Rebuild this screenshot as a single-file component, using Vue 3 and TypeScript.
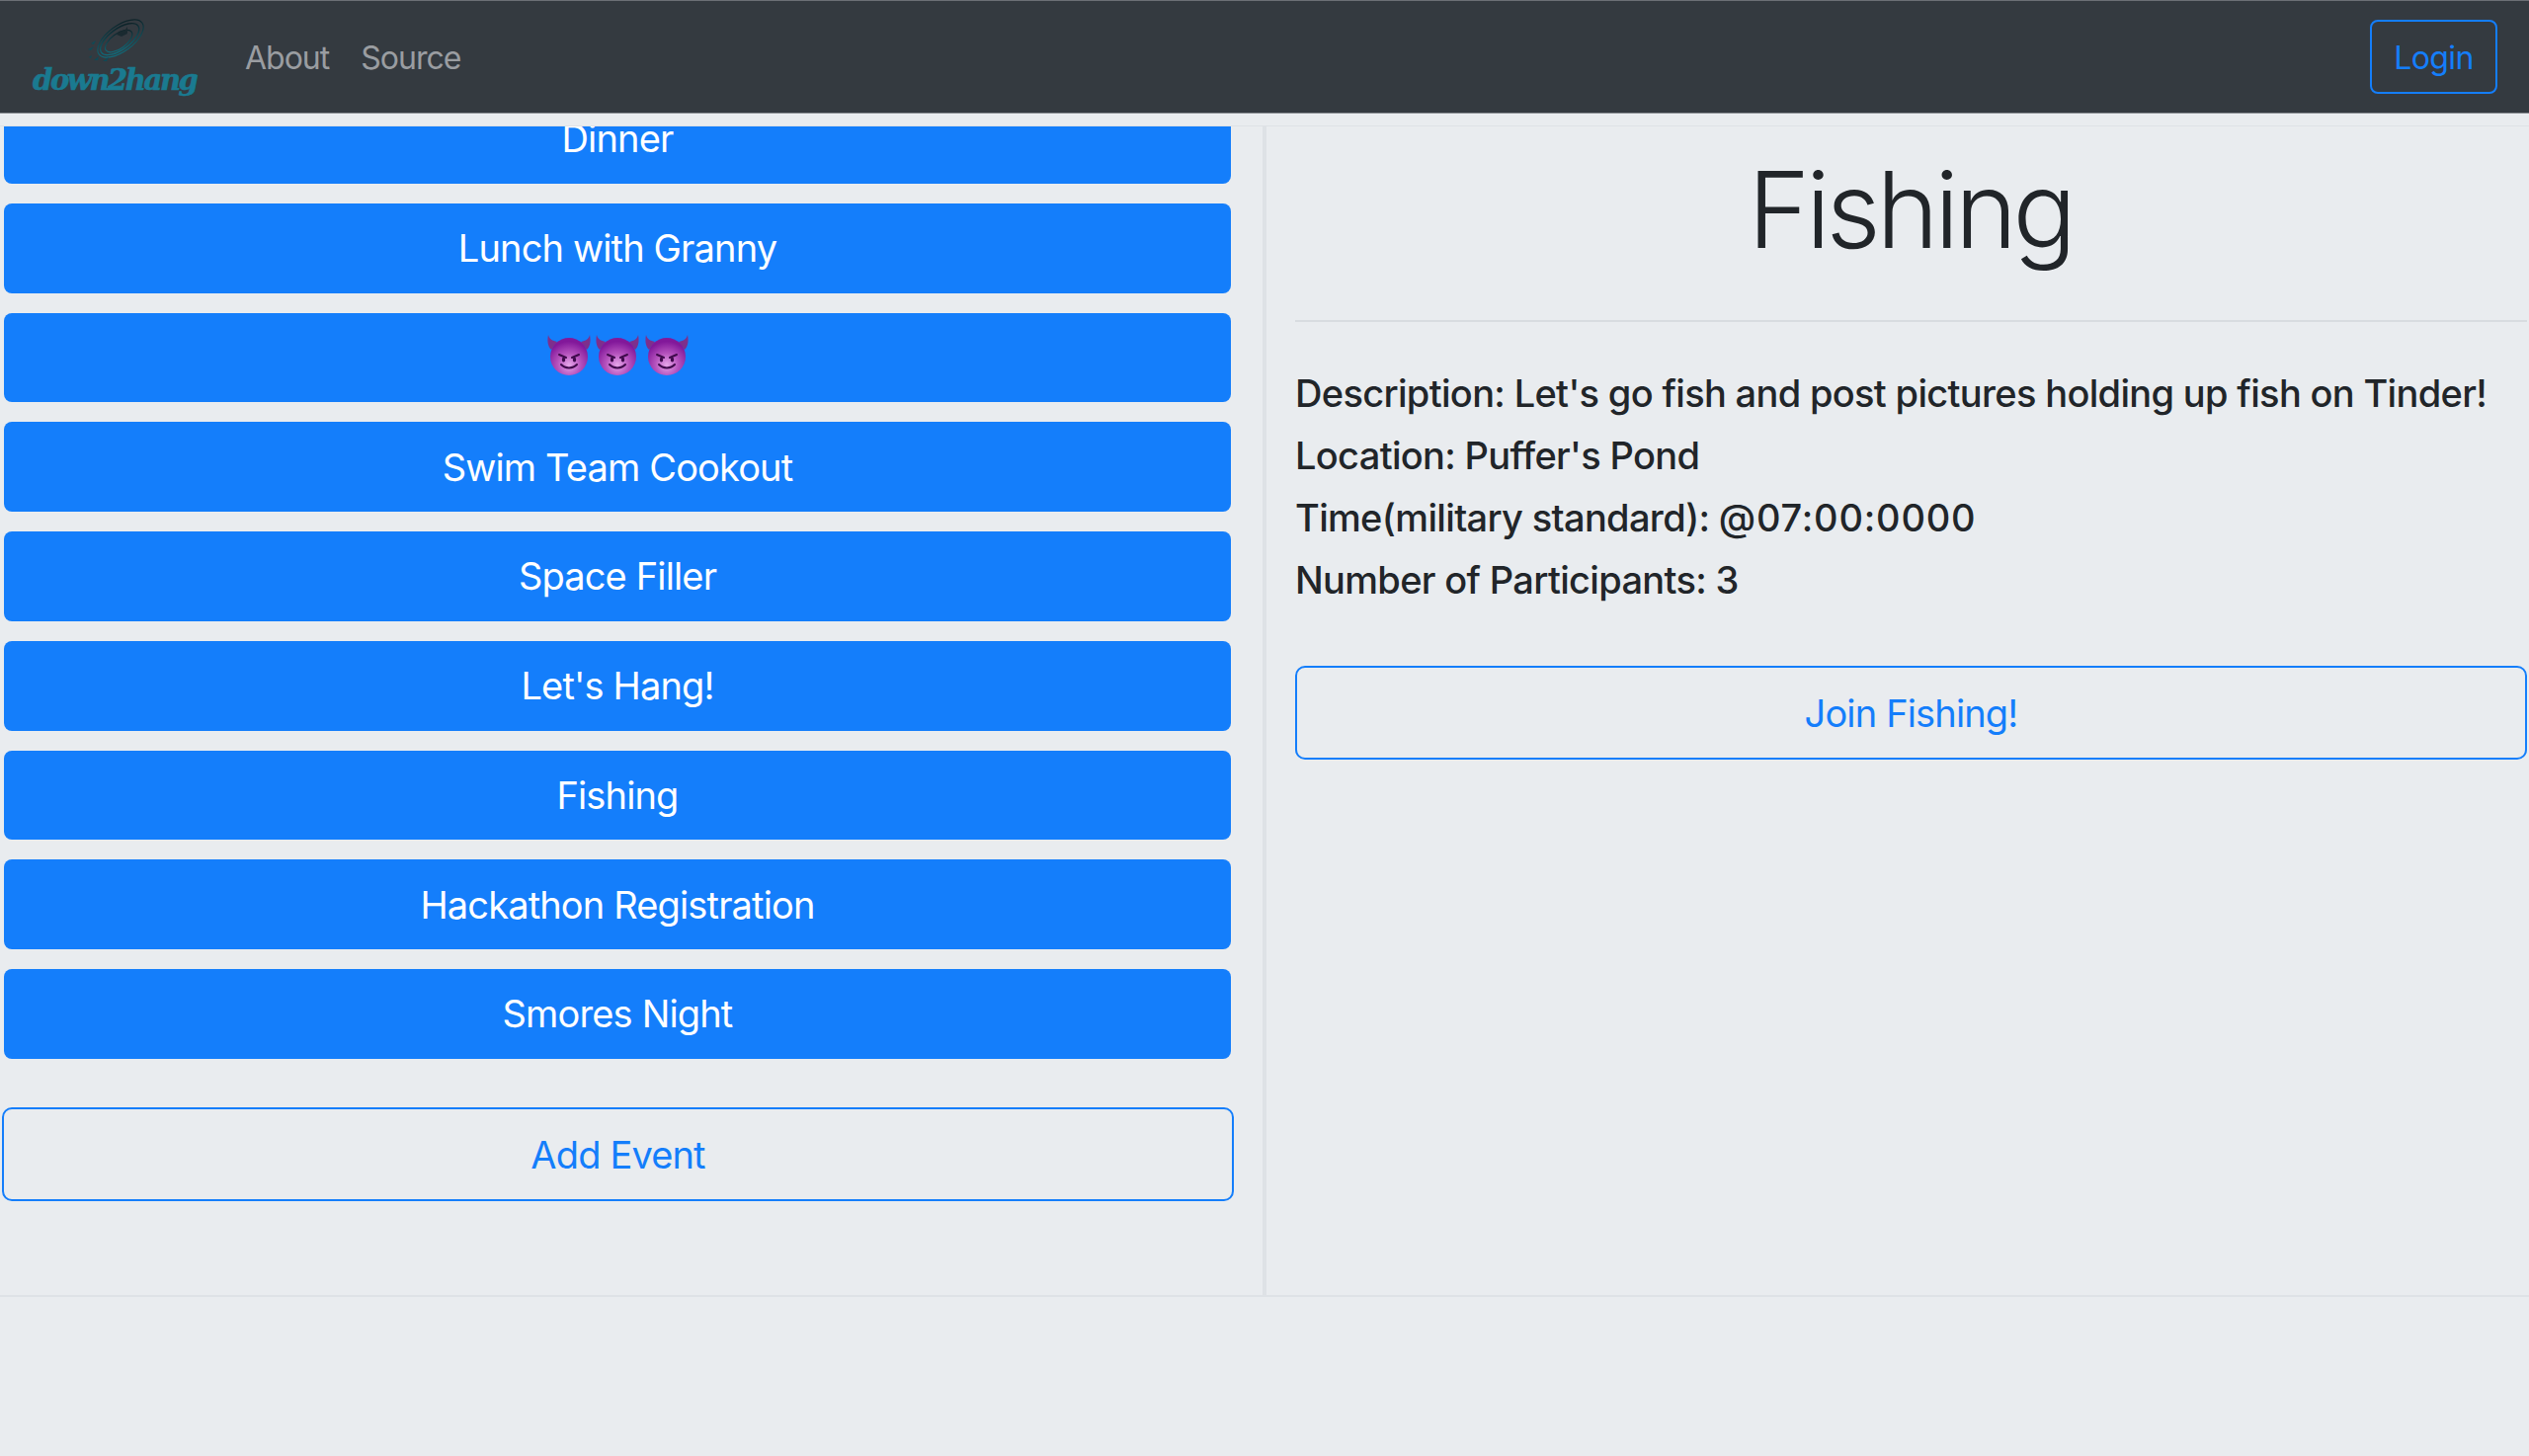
<script setup lang="ts">
interface Detail {
  text: string
  wide?: string
}
const events: string[] = [
  'Lunch with Granny',
  '',
  'Swim Team Cookout',
  'Space Filler',
  "Let's Hang!",
  'Fishing',
  'Hackathon Registration',
  'Smores Night',
]
const details: Detail[] = [
  { text: "Description: Let's go fish and post pictures holding up fish on Tinder!" },
  { text: "Location: Puffer's Pond" },
  { text: 'Time(military standard): ', wide: '@07:00:0000' },
  { text: 'Number of Participants: 3' },
]
</script>

<template>
  <div class="page">
    <nav class="navbar">
      <div class="brand">
        <svg class="logo-icon" viewBox="0 0 64 50" width="64" height="50" aria-hidden="true">
          <defs>
            <linearGradient id="lg" x1="0" y1="1" x2="1" y2="0">
              <stop offset="0" stop-color="#117a8b" />
              <stop offset="1" stop-color="#0d1418" />
            </linearGradient>
          </defs>
          <g fill="none" stroke="url(#lg)" transform="rotate(-36 36 20)">
            <ellipse cx="36" cy="20" rx="27" ry="13" stroke-width="1.2" />
            <ellipse cx="35" cy="20" rx="23" ry="10.500" stroke-width="1.4" />
            <ellipse cx="33" cy="21" rx="16" ry="7.500" stroke-width="1.200" />
          </g>
          <path d="M34 14l7-3 2-3 0 7-6 3-5-2z" fill="#1a2a30" />
          <path d="M6 25l5-3-2 4zM3 31l6-3-3 4zM9 42l5-4-1 4zM18 43l6-4-2 4zM4 39l3-2-1 3z" fill="#0f4a56" />
        </svg>
        <span class="logo-text">down2hang</span>
      </div>
      <a class="nav-link about">About</a>
      <a class="nav-link">Source</a>
      <button class="login">Login</button>
    </nav>

    <main class="content">
      <section class="left">
        <div class="list">
          <button class="event first">Dinner</button>
          <button v-for="(e, i) in events" :key="i" class="event">
            <template v-if="e">{{ e }}</template>
            <span v-else class="devils" role="img" aria-label="smiling devils">
              <svg v-for="n in 3" :key="n" viewBox="0 0 44 42" width="44" height="42">
                <defs>
                  <radialGradient :id="'face' + n" cx="50%" cy="72%" r="62%">
                    <stop offset="0" stop-color="#e6a6ea" />
                    <stop offset="0.5" stop-color="#b552bd" />
                    <stop offset="1" stop-color="#82189a" />
                  </radialGradient>
                </defs>
                <path d="M1 0c1 4 4 6 9 7L4 15C0 11 0 5 1 0zM43 0c-1 4-4 6-9 7l6 8c4-4 4-10 3-15z" fill="#7d2f8c" />
                <circle cx="22" cy="22" r="19" :fill="'url(#face' + n + ')'" />
                <g fill="none" stroke="#3f0a4c" stroke-width="2" stroke-linecap="round">
                  <path d="M12 20l7 3M32 20l-7 3" />
                  <path d="M14 30c4 4.500 12 4.500 16 0" />
                </g>
                <ellipse cx="16.500" cy="25" rx="1.700" ry="2.600" fill="#3f0a4c" />
                <ellipse cx="27.500" cy="25" rx="1.700" ry="2.600" fill="#3f0a4c" />
              </svg>
            </span>
          </button>
        </div>
        <button class="outline add">Add Event</button>
      </section>

      <section class="right">
        <h1 class="title">Fishing</h1>
        <hr class="rule" />
        <p v-for="d in details" :key="d.text" class="detail">{{ d.text }}<span v-if="d.wide" class="wide">{{ d.wide }}</span></p>
        <button class="outline join">Join Fishing!</button>
      </section>
    </main>
  </div>
</template>

<style>
html, body { margin: 0; background: #e9ecef; }
</style>

<style scoped>
.page {
  height: 1474px;
  overflow: hidden;
  background: #e9ecef;
  font-family: Inter, "Liberation Sans", sans-serif;
  color: #212529;
}
.navbar {
  height: 113px;
  display: flex;
  align-items: center;
  background: #343a40;
  border-top: 1px solid #6c7075;
  border-bottom: 1px solid #8a8e93;
}
.brand {
  width: 248px;
  height: 100%;
  position: relative;
  flex: none;
}
.logo-icon { position: absolute; left: 86px; top: 18px; }
.logo-text {
  position: absolute;
  left: 33px;
  top: 60px;
  font-family: "DejaVu Serif", serif;
  font-weight: 700;
  font-style: italic;
  font-size: 29px;
  line-height: 40px;
  letter-spacing: -2.4px;
  -webkit-text-stroke: 0.6px #1a7a90;
  color: #1a7a90;
}
.nav-link {
  font-size: 32px;
  line-height: 48px;
  letter-spacing: -1px;
  color: #9a9da1;
  transform: translateY(1px);
}
.about { margin-right: 32px; }
.login {
  margin-left: auto;
  margin-right: 32px;
  width: 129px;
  height: 75px;
  padding: 2px 0 0;
  background: transparent;
  border: 2px solid #147efb;
  border-radius: 8px;
  color: #147efb;
  font: 32px Inter, sans-serif;
  letter-spacing: -0.6px;
}
.content {
  margin-top: 12px;
  display: flex;
  height: 1183px;
  border-top: 1px solid #dee2e6;
  border-bottom: 2px solid #dee2e6;
}
.left {
  width: 1278px;
  flex: none;
  border-right: 4px solid #dee2e6;
  overflow: hidden;
}
.list {
  margin: 0 0 0 4px;
  width: 1242px;
  display: flex;
  flex-direction: column;
  gap: 20px;
}
.event {
  height: 90.75px;
  flex: none;
  padding: 0;
  border: 0;
  border-radius: 8px;
  background: #147efb;
  color: #fff;
  font: 38px Inter, sans-serif;
  letter-spacing: -0.85px;
  display: flex;
  align-items: center;
  justify-content: center;
}
.first { margin-top: -33px; }
.devils { display: flex; gap: 5.5px; margin-bottom: 3px; }
.outline {
  display: block;
  box-sizing: border-box;
  height: 95px;
  padding: 0;
  background: transparent;
  border: 2px solid #147efb;
  border-radius: 10px;
  color: #147efb;
  font: 38px Inter, sans-serif;
  letter-spacing: -0.85px;
}
.add {
  width: 1247px;
  margin: 49.25px 0 0 2px;
}
.right {
  flex: 1;
  padding: 0 2px 0 29px;
  min-width: 0;
}
.title {
  margin: 0 2px 0 0;
  padding-top: 17px;
  height: 196px;
  box-sizing: border-box;
  text-align: center;
  font-weight: 300;
  font-size: 107px;
  line-height: 134px;
  letter-spacing: -4.3px;
}
.rule {
  margin: 0 0 40.5px;
  border: 0;
  border-top: 2px solid #d8dce0;
}
.detail {
  margin: 0;
  font-size: 38px;
  font-weight: 500;
  line-height: 63px;
  letter-spacing: -0.67px;
}
.wide { letter-spacing: 0.8px; }
.join {
  width: 100%;
  margin-top: 55.5px;
}
</style>
